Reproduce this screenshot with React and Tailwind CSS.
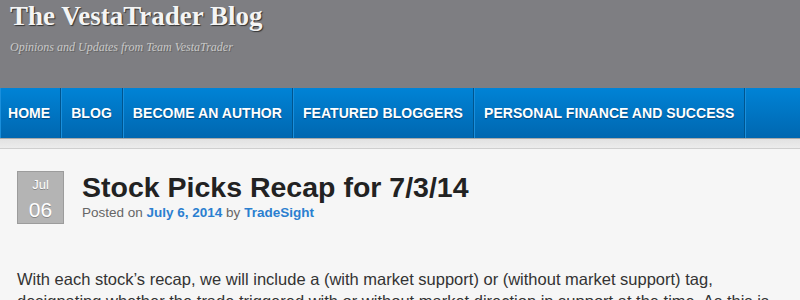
import React from 'react';

const navItems = [
    "HOME",
    "BLOG",
    "BECOME AN AUTHOR",
    "FEATURED BLOGGERS",
    "PERSONAL FINANCE AND SUCCESS",
];

function App() {
    return (
        <div className="w-[800px] h-[300px] overflow-hidden bg-[#f6f6f6] font-['Liberation_Sans',Arial,sans-serif]">
            <header className="h-[88px] bg-[#7e7e82] pl-[10px] pt-[1px]">
                <h1 className="font-['Liberation_Serif',serif] font-bold text-[27px] leading-[30px] text-[#f4f4f4] [text-shadow:1px_1px_1px_#333]">
                    The VestaTrader Blog
                </h1>
                <p className="mt-[9px] font-['Liberation_Serif',serif] italic text-[12px] leading-[14px] text-[#c8c8c8] [text-shadow:1px_1px_0_#666]">
                    Opinions and Updates from Team VestaTrader
                </p>
            </header>

            <nav className="h-[50px] flex bg-gradient-to-b from-[#0083d6] to-[#0067b0]">
                {navItems.map((item, i) => (
                    <div
                        key={item}
                        className={
                            "h-full flex items-center border-r border-r-[#00558f] shadow-[inset_1px_0_0_#1a8fdc] text-white font-bold text-[14px] tracking-[0.05px] [text-shadow:0_1px_1px_#00447a] " +
                            (i === 0 ? "pl-[8px] pr-[10px]" : "px-[10px]")
                        }
                    >
                        {item}
                    </div>
                ))}
                <div className="flex-1 shadow-[inset_1px_0_0_#1a8fdc]"></div>
            </nav>

            <div className="h-[11px] border-t border-t-[#a9a9a9] border-b border-b-[#cfcfcf] bg-gradient-to-b from-[#e2e2e2] to-[#ececec]"></div>

            <main className="pl-[17px] pt-[22px]">
                <div className="flex">
                    <div className="w-[47px] h-[53px] bg-[#b4b4b4] border border-[#9c9c9c] flex flex-col items-center text-white [text-shadow:0_1px_0_#888]">
                        <span className="text-[13px] leading-[13px] mt-[6px]">Jul</span>
                        <span className="text-[21px] leading-[21px] mt-[8px]">06</span>
                    </div>
                    <div className="ml-[18px]">
                        <h2 className="font-bold text-[28.5px] leading-[32px] text-[#222]">
                            Stock Picks Recap for 7/3/14
                        </h2>
                        <p className="text-[13.5px] leading-[16px] text-[#666] mt-[2px]">
                            Posted on <span className="text-[#2b7fd0] font-bold">July 6, 2014</span> by{" "}
                            <span className="text-[#2b7fd0] font-bold">TradeSight</span>
                        </p>
                    </div>
                </div>
                <p className="mt-[44px] text-[16.5px] leading-[22px] text-[#333] whitespace-nowrap">
                    With each stock’s recap, we will include a (with market support) or (without market support) tag,
                    <br />
                    designating whether the trade triggered with or without market direction in support at the time. As this is
                </p>
            </main>
        </div>
    );
}

export default App;
